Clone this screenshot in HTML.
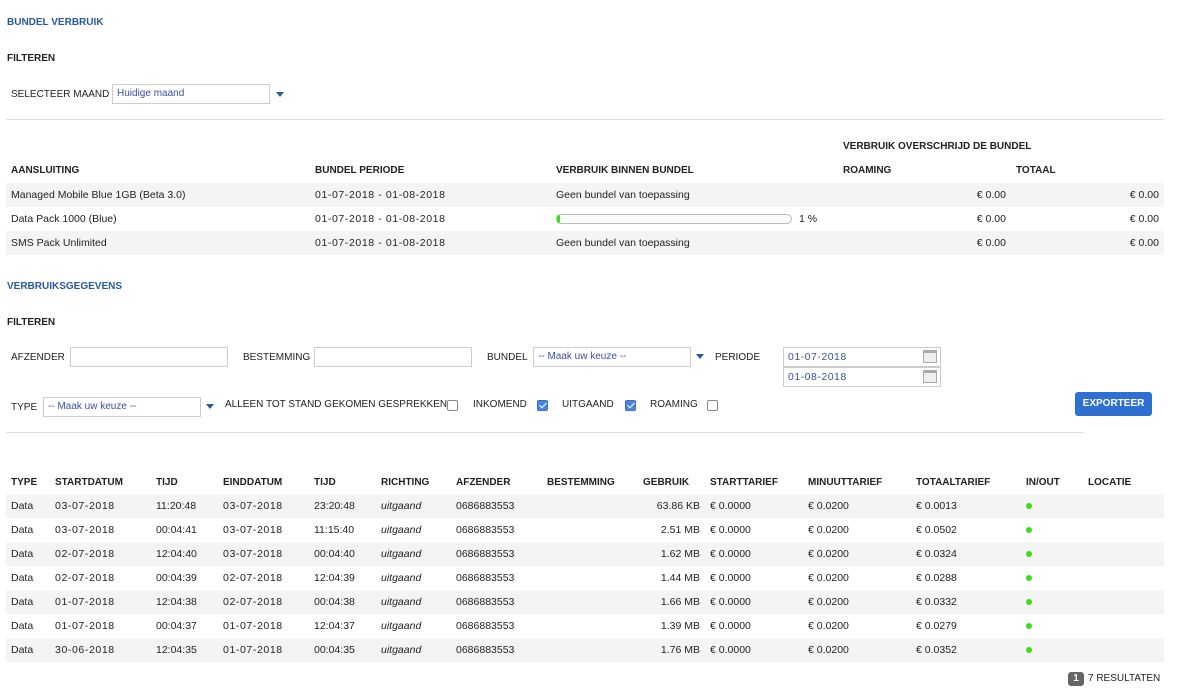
<!DOCTYPE html>
<html><head><meta charset="utf-8"><style>
*{margin:0;padding:0;box-sizing:border-box}
body{width:1178px;height:698px;background:#fff;font-family:"Liberation Sans",sans-serif;font-size:10px;color:#222;position:relative;overflow:hidden}
.a{position:absolute;white-space:nowrap}
.b{font-weight:bold}
.blue{color:#2a5a9e}
.row{position:absolute;left:6px;width:1158px;height:24px;line-height:25px;font-size:10.5px}
.row.h{font-size:10px}
.row span{position:absolute;white-space:nowrap}
.d{letter-spacing:.6px}
.g{background:#f4f4f4}
.in{position:absolute;border:1px solid #ccc;height:20px;background:#fff;color:#3a4fa8;line-height:18px;padding-left:4px;font-size:10px}
.arr{position:absolute;width:0;height:0;border-left:4px solid transparent;border-right:4px solid transparent;border-top:5px solid #2a5a9e}
.cb{position:absolute;width:11px;height:11px;border:1px solid #888;border-radius:2px;background:#fff}
.cb.on{background:#4a86e0;border-color:#3a70c8}
.cb.on:after{content:"";position:absolute;left:3px;top:0px;width:3px;height:6px;border:solid #fff;border-width:0 1.5px 1.5px 0;transform:rotate(45deg)}
.dot{position:absolute;width:6px;height:6px;border-radius:50%;background:#3ddc1c}
.cal{position:absolute;width:14px;height:13px;border:1px solid #aaa;border-top:3px solid #aaa;background:#eee}
.hr{position:absolute;height:1px;background:#ddd}
</style></head><body>
<div class="a b blue" style="left:7px;top:17px">BUNDEL VERBRUIK</div>
<div class="a b" style="left:7px;top:53px">FILTEREN</div>
<div class="a" style="left:11px;top:89px">SELECTEER MAAND</div>
<div class="in" style="left:112px;top:84px;width:158px">Huidige maand</div>
<div class="arr" style="left:276px;top:92px"></div>
<div class="hr" style="left:6px;top:119px;width:1158px"></div>

<div class="a b" style="left:843px;top:141px">VERBRUIK OVERSCHRIJD DE BUNDEL</div>
<div class="a b" style="left:11px;top:165px">AANSLUITING</div>
<div class="a b" style="left:315px;top:165px">BUNDEL PERIODE</div>
<div class="a b" style="left:556px;top:165px">VERBRUIK BINNEN BUNDEL</div>
<div class="a b" style="left:843px;top:165px">ROAMING</div>
<div class="a b" style="left:1016px;top:165px">TOTAAL</div>

<div class="row g" style="top:183px"><span style="left:5px">Managed Mobile Blue 1GB (Beta 3.0)</span><span class="d" style="left:309px">01-07-2018 - 01-08-2018</span><span style="left:550px">Geen bundel van toepassing</span><span style="right:158px">€ 0.00</span><span style="right:5px">€ 0.00</span></div>
<div class="row" style="top:207px"><span style="left:5px">Data Pack 1000 (Blue)</span><span class="d" style="left:309px">01-07-2018 - 01-08-2018</span><span style="left:550px;top:7px;width:236px;height:10px;border:1px solid #bbb;border-radius:5px;background:#fafafa;line-height:8px"><i style="display:block;width:3px;height:8px;background:#3ddc1c;border-radius:4px"></i></span><span style="left:793px">1 %</span><span style="right:158px">€ 0.00</span><span style="right:5px">€ 0.00</span></div>
<div class="row g" style="top:231px"><span style="left:5px">SMS Pack Unlimited</span><span class="d" style="left:309px">01-07-2018 - 01-08-2018</span><span style="left:550px">Geen bundel van toepassing</span><span style="right:158px">€ 0.00</span><span style="right:5px">€ 0.00</span></div>

<div class="a b blue" style="left:7px;top:281px">VERBRUIKSGEGEVENS</div>
<div class="a b" style="left:7px;top:317px">FILTEREN</div>

<div class="a" style="left:11px;top:352px">AFZENDER</div>
<div class="in" style="left:70px;top:347px;width:158px"></div>
<div class="a" style="left:243px;top:352px">BESTEMMING</div>
<div class="in" style="left:314px;top:347px;width:158px"></div>
<div class="a" style="left:487px;top:352px">BUNDEL</div>
<div class="in" style="left:533px;top:347px;width:158px">-- Maak uw keuze --</div>
<div class="arr" style="left:696px;top:354px"></div>
<div class="a" style="left:715px;top:352px">PERIODE</div>
<div class="in d" style="left:783px;top:347px;width:158px;font-size:10.5px;letter-spacing:.5px">01-07-2018</div>
<div class="cal" style="left:923px;top:350px"></div>
<div class="in d" style="left:783px;top:367px;width:158px;font-size:10.5px;letter-spacing:.5px">01-08-2018</div>
<div class="cal" style="left:923px;top:370px"></div>

<div class="a" style="left:11px;top:402px">TYPE</div>
<div class="in" style="left:43px;top:397px;width:158px">-- Maak uw keuze --</div>
<div class="arr" style="left:206px;top:404px"></div>
<div class="a" style="left:225px;top:399px">ALLEEN TOT STAND GEKOMEN GESPREKKEN</div>
<div class="cb" style="left:447px;top:400px"></div>
<div class="a" style="left:473px;top:399px">INKOMEND</div>
<div class="cb on" style="left:537px;top:400px"></div>
<div class="a" style="left:562px;top:399px">UITGAAND</div>
<div class="cb on" style="left:625px;top:400px"></div>
<div class="a" style="left:650px;top:399px">ROAMING</div>
<div class="cb" style="left:707px;top:400px"></div>
<div class="a b" style="left:1075px;top:392px;width:77px;height:24px;background:#2f6fd0;color:#fff;border-radius:3px;text-align:center;line-height:24px;font-size:10px">EXPORTEER</div>
<div class="hr" style="left:6px;top:432px;width:1078px"></div>

<div class="row b h" style="top:470px"><span style="left:5px">TYPE</span><span style="left:49px">STARTDATUM</span><span style="left:150px">TIJD</span><span style="left:217px">EINDDATUM</span><span style="left:308px">TIJD</span><span style="left:375px">RICHTING</span><span style="left:450px">AFZENDER</span><span style="left:541px">BESTEMMING</span><span style="left:637px">GEBRUIK</span><span style="left:704px">STARTTARIEF</span><span style="left:802px">MINUUTTARIEF</span><span style="left:910px">TOTAALTARIEF</span><span style="left:1020px">IN/OUT</span><span style="left:1082px">LOCATIE</span></div>

<div class="row g" style="top:494px"><span style="left:5px">Data</span><span class="d" style="left:49px">03-07-2018</span><span style="left:150px">11:20:48</span><span class="d" style="left:217px">03-07-2018</span><span style="left:308px">23:20:48</span><span style="left:375px;font-style:italic">uitgaand</span><span style="left:450px">0686883553</span><span style="right:464px">63.86 KB</span><span style="left:704px">€ 0.0000</span><span style="left:802px">€ 0.0200</span><span style="left:910px">€ 0.0013</span><i class="dot" style="left:1020px;top:9px"></i></div>
<div class="row" style="top:518px"><span style="left:5px">Data</span><span class="d" style="left:49px">03-07-2018</span><span style="left:150px">00:04:41</span><span class="d" style="left:217px">03-07-2018</span><span style="left:308px">11:15:40</span><span style="left:375px;font-style:italic">uitgaand</span><span style="left:450px">0686883553</span><span style="right:464px">2.51 MB</span><span style="left:704px">€ 0.0000</span><span style="left:802px">€ 0.0200</span><span style="left:910px">€ 0.0502</span><i class="dot" style="left:1020px;top:9px"></i></div>
<div class="row g" style="top:542px"><span style="left:5px">Data</span><span class="d" style="left:49px">02-07-2018</span><span style="left:150px">12:04:40</span><span class="d" style="left:217px">03-07-2018</span><span style="left:308px">00:04:40</span><span style="left:375px;font-style:italic">uitgaand</span><span style="left:450px">0686883553</span><span style="right:464px">1.62 MB</span><span style="left:704px">€ 0.0000</span><span style="left:802px">€ 0.0200</span><span style="left:910px">€ 0.0324</span><i class="dot" style="left:1020px;top:9px"></i></div>
<div class="row" style="top:566px"><span style="left:5px">Data</span><span class="d" style="left:49px">02-07-2018</span><span style="left:150px">00:04:39</span><span class="d" style="left:217px">02-07-2018</span><span style="left:308px">12:04:39</span><span style="left:375px;font-style:italic">uitgaand</span><span style="left:450px">0686883553</span><span style="right:464px">1.44 MB</span><span style="left:704px">€ 0.0000</span><span style="left:802px">€ 0.0200</span><span style="left:910px">€ 0.0288</span><i class="dot" style="left:1020px;top:9px"></i></div>
<div class="row g" style="top:590px"><span style="left:5px">Data</span><span class="d" style="left:49px">01-07-2018</span><span style="left:150px">12:04:38</span><span class="d" style="left:217px">02-07-2018</span><span style="left:308px">00:04:38</span><span style="left:375px;font-style:italic">uitgaand</span><span style="left:450px">0686883553</span><span style="right:464px">1.66 MB</span><span style="left:704px">€ 0.0000</span><span style="left:802px">€ 0.0200</span><span style="left:910px">€ 0.0332</span><i class="dot" style="left:1020px;top:9px"></i></div>
<div class="row" style="top:614px"><span style="left:5px">Data</span><span class="d" style="left:49px">01-07-2018</span><span style="left:150px">00:04:37</span><span class="d" style="left:217px">01-07-2018</span><span style="left:308px">12:04:37</span><span style="left:375px;font-style:italic">uitgaand</span><span style="left:450px">0686883553</span><span style="right:464px">1.39 MB</span><span style="left:704px">€ 0.0000</span><span style="left:802px">€ 0.0200</span><span style="left:910px">€ 0.0279</span><i class="dot" style="left:1020px;top:9px"></i></div>
<div class="row g" style="top:638px"><span style="left:5px">Data</span><span class="d" style="left:49px">30-06-2018</span><span style="left:150px">12:04:35</span><span class="d" style="left:217px">01-07-2018</span><span style="left:308px">00:04:35</span><span style="left:375px;font-style:italic">uitgaand</span><span style="left:450px">0686883553</span><span style="right:464px">1.76 MB</span><span style="left:704px">€ 0.0000</span><span style="left:802px">€ 0.0200</span><span style="left:910px">€ 0.0352</span><i class="dot" style="left:1020px;top:9px"></i></div>

<div class="a b" style="left:1068px;top:672px;width:16px;height:14px;background:#666;color:#fff;border-radius:3px;text-align:center;line-height:14px">1</div>
<div class="a" style="left:1088px;top:673px">7 RESULTATEN</div>
</body></html>
